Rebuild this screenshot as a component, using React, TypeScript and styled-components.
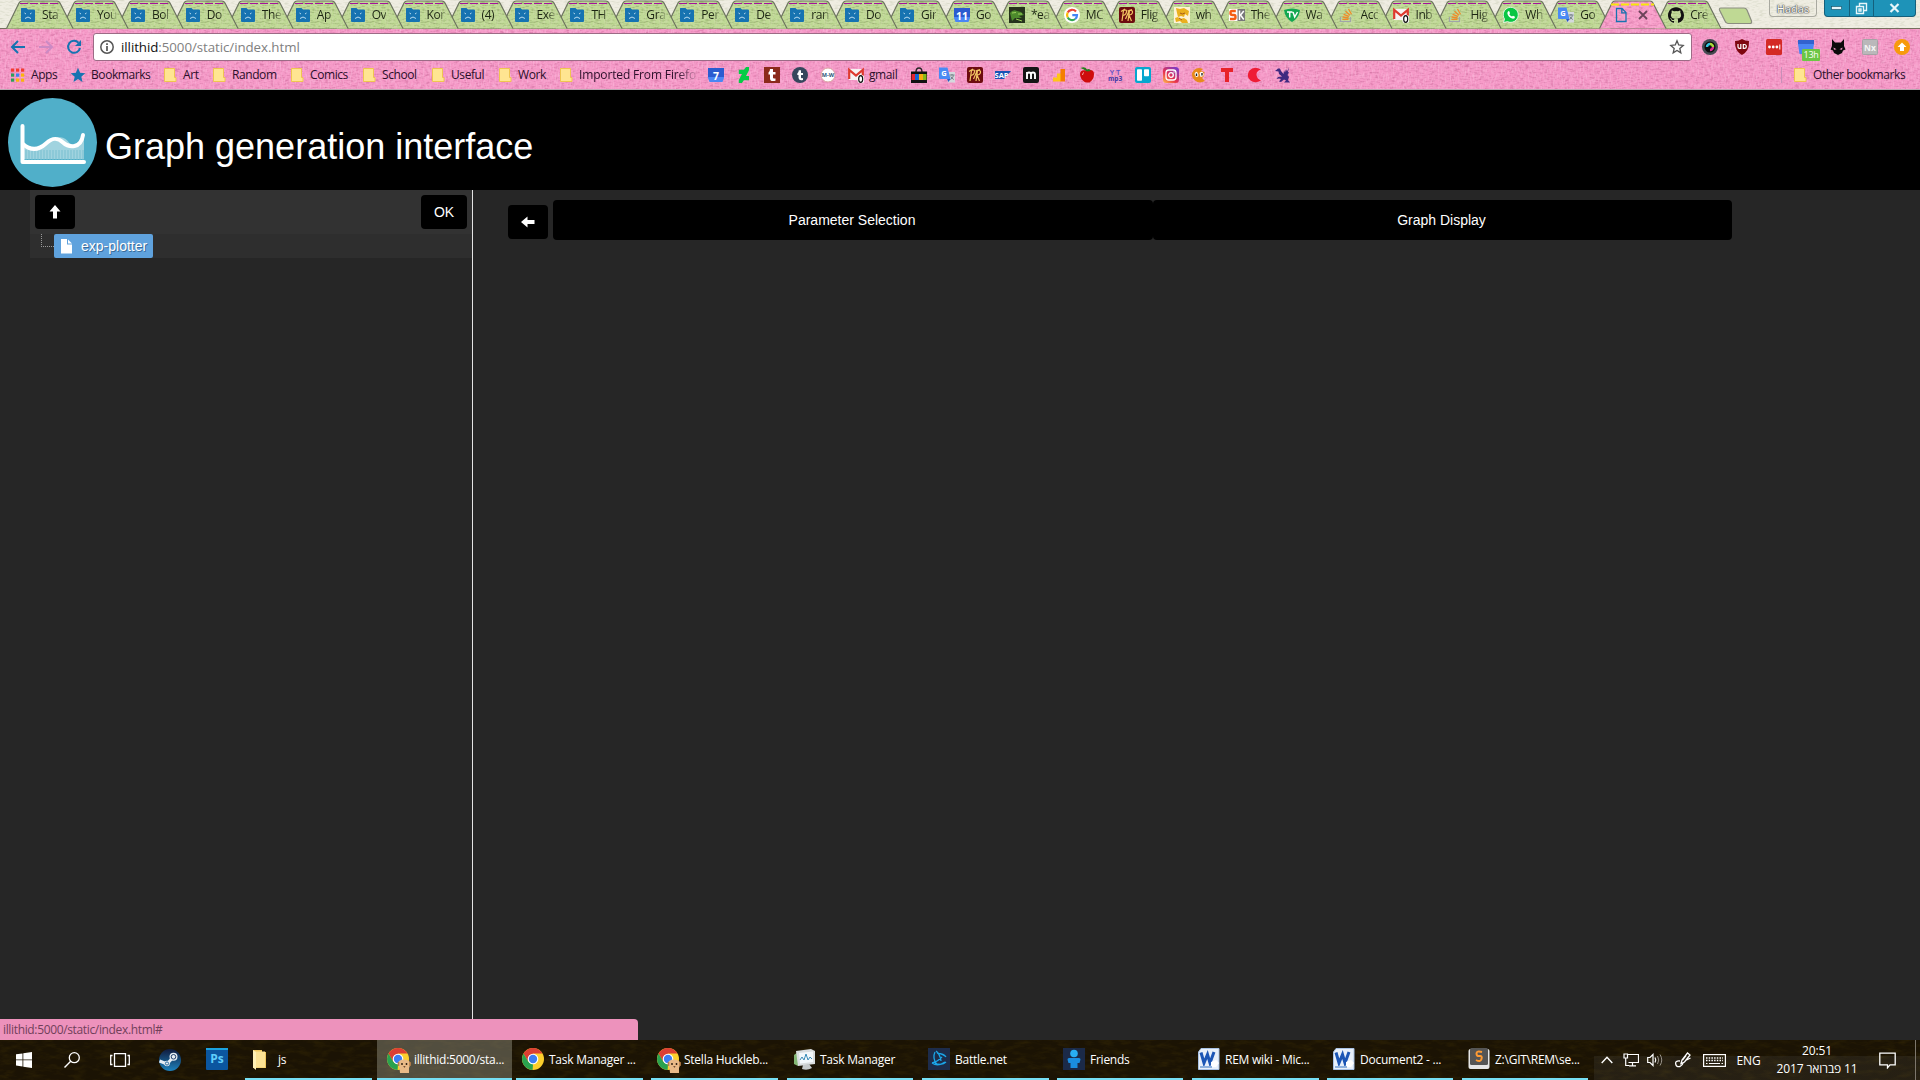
import React from "react";
import styled, { createGlobalStyle } from "styled-components";

const UI = `"Open Sans", "Noto Sans", "Liberation Sans", sans-serif`;

const Global = createGlobalStyle`
  html, body { margin: 0; padding: 0; background: #262626; }
  body { width: 1920px; height: 1080px; overflow: hidden; }
  * { box-sizing: border-box; }
  svg { display: block; flex: none; }
`;

const Screen = styled.div`
  width: 1920px;
  height: 1080px;
  display: flex;
  flex-direction: column;
  font-family: ${UI};
  overflow: hidden;
`;

const TextureLayer = styled.svg`
  position: absolute;
  inset: 0;
  width: 100%;
  height: 100%;
  pointer-events: none;
`;

/* ---------- browser chrome ---------- */

const Strip = styled.div`
  position: relative;
  height: 28px;
  background: #efede2;
  display: flex;
  padding-left: 6px;
`;

const Tab = styled.div<{ $z: number }>`
  position: relative;
  z-index: ${(p) => p.$z};
  width: 54.95px;
  flex: none;
  height: 29px;
  display: flex;
  align-items: center;
  padding: 1px 0 0 14px;
  gap: 6px;
`;

const TabShape = styled.svg`
  position: absolute;
  left: 0;
  top: 0;
`;

const TabIcon = styled.div`
  position: relative;
  width: 16px;
  height: 16px;
  flex: none;
`;

const TabTitle = styled.div`
  position: relative;
  flex: none;
  white-space: nowrap;
  font-size: 12px;
  line-height: 18px;
  letter-spacing: -0.4px;
  color: transparent;
  background: linear-gradient(90deg, #1c2412 11px, rgba(28, 36, 18, 0.1) 20px);
  background-clip: text;
`;

const CloseMark = styled.div`
  position: relative;
  margin-left: 3px;
`;

const NewTab = styled.div`
  margin: 7px 0 0 9px;
`;

const WindowBox = styled.div`
  position: relative;
  margin-left: auto;
  display: flex;
  align-items: flex-start;
  gap: 7px;
  padding-right: 4px;
`;

const UserBadge = styled.div`
  width: 48px;
  height: 17px;
  border: 1px solid #a9a9a0;
  border-top: 0;
  border-radius: 0 0 4px 4px;
  font-size: 11px;
  line-height: 17px;
  text-align: center;
  color: #fff;
  text-shadow: 0 0 1px #333, 0 0 1px #333, 0 0 2px #555;
`;

const WindowButtons = styled.div`
  display: flex;
  height: 17px;
  width: 92px;
  background: #1e93b8;
  border: 1px solid #14607c;
  border-top: 0;
  border-radius: 0 0 4px 4px;
`;

const WindowButton = styled.div<{ $w: number }>`
  width: ${(p) => p.$w}px;
  display: flex;
  justify-content: center;
  align-items: center;
  border-right: 1px solid #14607c;
  &:last-child { border-right: 0; }
`;

const Pink = styled.div`
  position: relative;
  height: 62px;
  background: #f69ac8;
  border-top: 1px solid #76705f;
  border-bottom: 1px solid #b9a9b2;
  display: flex;
  flex-direction: column;
`;

const NavRow = styled.div`
  position: relative;
  height: 36px;
  padding: 0 10px;
  display: flex;
  align-items: center;
`;

const NavIcons = styled.div`
  display: flex;
  gap: 12px;
  width: 83px;
`;

const AddressBar = styled.div`
  width: 1599px;
  height: 28px;
  background: #fff;
  border: 1px solid #9c6b86;
  border-radius: 3px;
  display: flex;
  align-items: center;
  padding: 0 6px 0 5px;
`;

const Url = styled.div`
  flex: 1;
  margin-left: 6px;
  font-size: 13.3px;
  line-height: 20px;
  letter-spacing: -0.06px;
  color: #808080;
  span { color: #111; }
`;

const Extensions = styled.div`
  display: flex;
  gap: 16px;
  margin-left: 10px;
`;

const BadgeHolder = styled.div`
  position: relative;
  width: 16px;
`;

const HourBadge = styled.div`
  position: absolute;
  left: 4px;
  top: 10px;
  width: 18px;
  height: 12px;
  background: #6cc644;
  border-radius: 1px;
  color: #fff;
  font-size: 9px;
  line-height: 12px;
  text-align: center;
  letter-spacing: -0.3px;
`;

const Bookmarks = styled.div`
  position: relative;
  height: 20px;
  display: flex;
  align-items: center;
  padding-left: 10px;
`;

const Bookmark = styled.div<{ $w: number; $fade?: boolean }>`
  width: ${(p) => p.$w}px;
  flex: none;
  display: flex;
  align-items: center;
  gap: 5px;
  font-size: 12px;
  line-height: 18px;
  color: #2b0f2a;
  white-space: nowrap;
  letter-spacing: ${(p) => (p.$fade ? -0.15 : -0.42)}px;
  span {
    mask-image: ${(p) => (p.$fade ? "linear-gradient(90deg,#000 84%,rgba(0,0,0,.15))" : "none")};
  }
`;

const OtherBookmarks = styled.div`
  margin-left: auto;
  height: 16px;
  border-left: 1px solid #c78fb8;
  padding-left: 10px;
  display: flex;
  align-items: center;
`;

/* ---------- page ---------- */

const Header = styled.div`
  height: 100px;
  background: #000;
  display: flex;
  align-items: center;
  padding: 5px 0 0 8px;
  gap: 7px;
  font-family: "Liberation Sans", Arial, sans-serif;
`;

const Title = styled.h1`
  margin: 9px 0 0;
  font-size: 36px;
  line-height: 40px;
  font-weight: 400;
  color: #fff;
`;

const Page = styled.div`
  position: relative;
  height: 850px;
  background: #262626;
  display: flex;
  font-family: "Liberation Sans", Arial, sans-serif;
`;

const Sidebar = styled.div`
  width: 473px;
  border-right: 1px solid #e4e4e4;
  padding-left: 30px;
`;

const SideTools = styled.div`
  height: 44px;
  padding: 5px;
  background: #323232;
  display: flex;
  justify-content: space-between;
`;

const BlackButton = styled.div<{ $w: number }>`
  width: ${(p) => p.$w}px;
  height: 34px;
  flex: none;
  background: #000;
  border-radius: 4px;
  color: #fff;
  font-size: 14px;
  display: flex;
  align-items: center;
  justify-content: center;
`;

const TreeRow = styled.div`
  height: 24px;
  background: #2e2e2e;
  padding-left: 11px;
  display: flex;
`;

const Branch = styled.div`
  width: 13px;
  height: 13px;
  border-left: 1px dotted #999;
  border-bottom: 1px dotted #999;
`;

const TreeNode = styled.div`
  width: 99px;
  height: 24px;
  background: #5fa2dd;
  border-radius: 2px;
  color: #fff;
  font-size: 14px;
  line-height: 24px;
  display: flex;
  align-items: center;
  padding-left: 7px;
  gap: 9px;
  text-shadow: 1px 1px 0 #3a6c98;
`;

const Content = styled.div`
  flex: 1;
  padding: 10px 0 0 35px;
  display: flex;
  align-items: flex-start;
`;

const BackHolder = styled.div`
  padding: 5px 5px 0 0;
`;

const PageTab = styled.div<{ $w: number }>`
  width: ${(p) => p.$w}px;
  height: 40px;
  padding-right: 2px;
  background: #000;
  border-radius: 4px;
  color: #fff;
  font-size: 14px;
  line-height: 40px;
  text-align: center;
`;

const StatusBar = styled.div`
  position: absolute;
  left: 0;
  bottom: 0;
  width: 638px;
  height: 21px;
  padding-left: 3px;
  background: #ed92bc;
  border-top-right-radius: 4px;
  font-family: ${UI};
  font-size: 12px;
  line-height: 21px;
  letter-spacing: -0.35px;
  color: #71405a;
`;

/* ---------- taskbar ---------- */

const Taskbar = styled.div`
  position: relative;
  height: 40px;
  background: #1b1304;
  display: flex;
`;

const PinnedRow = styled.div`
  position: relative;
  width: 245px;
  flex: none;
  display: flex;
  align-items: center;
`;

const Pinned = styled.div<{ $w: number }>`
  width: ${(p) => p.$w}px;
  flex: none;
  display: flex;
  justify-content: center;
`;

const Task = styled.div<{ $w: number; $mr: number; $active?: boolean }>`
  position: relative;
  width: ${(p) => p.$w}px;
  margin-right: ${(p) => p.$mr}px;
  flex: none;
  height: 40px;
  display: flex;
  align-items: center;
  gap: 5px;
  padding-left: ${(p) => (p.$active ? 10 : 6)}px;
  background: ${(p) => (p.$active ? "rgba(160,160,145,.42)" : "transparent")};
  border-bottom: 2px solid #76dff5;
  color: #fff;
  font-size: 12px;
  white-space: nowrap;
  letter-spacing: -0.25px;
`;

const Tray = styled.div`
  position: relative;
  flex: 1;
  display: flex;
  align-items: center;
  color: #fff;
  font-size: 12px;
  background: linear-gradient(180deg, transparent 40%, rgba(90, 90, 90, 0.18) 40%);
`;

const TrayItem = styled.div<{ $w: number }>`
  width: ${(p) => p.$w}px;
  flex: none;
  display: flex;
  justify-content: center;
  letter-spacing: -0.2px;
`;

const Clock = styled.div`
  width: 100px;
  flex: none;
  height: 40px;
  padding: 2px 0 0 2px;
  text-align: center;
  line-height: 18px;
  letter-spacing: -0.15px;
  white-space: nowrap;
  font-family: "Open Sans", "DejaVu Sans", sans-serif;
`;

const ShowDesktop = styled.div`
  width: 5px;
  height: 40px;
  margin-left: auto;
  border-left: 1px solid #7d766c;
`;

/* ---------- drawings ---------- */

const Defs = () => (
  <svg width="0" height="0" style={{ position: "absolute" }}>
    <defs>
      <filter id="weave" x="0" y="0" width="100%" height="100%" colorInterpolationFilters="sRGB">
        <feTurbulence type="fractalNoise" baseFrequency="0.2 0.6" numOctaves="2" seed="4" />
        <feColorMatrix values="0 0 0 0 0.6  0 0 0 0 0.2  0 0 0 0 0.4  2 0 0 0 -0.9" />
      </filter>
      <filter id="weaveLight" x="0" y="0" width="100%" height="100%" colorInterpolationFilters="sRGB">
        <feTurbulence type="fractalNoise" baseFrequency="0.6 0.2" numOctaves="2" seed="9" />
        <feColorMatrix values="0 0 0 0 1  0 0 0 0 0.88  0 0 0 0 0.95  2 0 0 0 -0.9" />
      </filter>
      <filter id="linen" x="0" y="0" width="100%" height="100%" colorInterpolationFilters="sRGB">
        <feTurbulence type="fractalNoise" baseFrequency="0.2 0.6" numOctaves="2" seed="2" />
        <feColorMatrix values="0 0 0 0 0.3  0 0 0 0 0.38  0 0 0 0 0.15  2 0 0 0 -0.95" />
      </filter>
      <filter id="grass" x="0" y="0" width="100%" height="100%" colorInterpolationFilters="sRGB">
        <feTurbulence type="fractalNoise" baseFrequency="0.07 0.2" numOctaves="4" seed="7" />
        <feColorMatrix values="0 0 0 0 0.27  0 0 0 0 0.21  0 0 0 0 0.02  2 0 0 0 -0.85" />
      </filter>
    </defs>
  </svg>
);

const Texture = ({ kinds, opacity = 1 }: { kinds: string[]; opacity?: number }) => (
  <TextureLayer opacity={opacity}>
    {kinds.map((k) => (
      <rect key={k} width="100%" height="100%" filter={`url(#${k})`} />
    ))}
  </TextureLayer>
);

const SvgText = ({ x = 8, y = 12, s = 10, c = "#fff", w = 700, children }: any) => (
  <text x={x} y={y} fontSize={s} fill={c} fontWeight={w} textAnchor="middle" fontFamily="Open Sans, sans-serif" letterSpacing="0">
    {children}
  </text>
);

const glyphs: Record<string, React.ReactNode> = {
  sad: (
    <>
      <path d="M1 1.500Q1 1 1.500 1H6.500L8 2.500H14Q15 2.500 15 3.500V14Q15 15 14 15H2Q1 15 1 14Z" fill="#1673b1" />
      <path d="M4.500 6l1.500 1M11.500 6l-1.500 1M5 11.500Q8 8.500 11 11.500" stroke="#b9dcf0" fill="none" />
    </>
  ),
  folder: <path d="M2.500 1.500H12.500V10.500H14V14.500H2.500Z" fill="#ffe591" stroke="#efc550" />,
  apps: (
    <>
      {["#f23b32", "#f23b32", "#f23b32", "#2f9e58", "#3c82f0", "#fbb40a", "#2f9e58", "#fbb40a", "#fbb40a"].map((c, i) => (
        <rect key={i} x={1 + (i % 3) * 5} y={1.500 + Math.floor(i / 3) * 5} width="3.200" height="3.200" fill={c} />
      ))}
    </>
  ),
  star: <path d="M8 .8l2.100 4.900 5.200.5-4 3.500 1.200 5.200L8 12.100l-4.500 2.800 1.200-5.200-4-3.500 5.200-.5z" fill="#1673b1" />,
  seven: (
    <>
      <path d="M0 1H16V11L14.500 15H1.500L0 11Z" fill="#4a86f4" />
      <path d="M0 1H16V10H0Z" fill="#2b5bd0" />
      <SvgText y={12.500} s={10.500}>7</SvgText>
    </>
  ),
  eleven: (
    <>
      <path d="M0 1H16V11L14.500 15H1.500L0 11Z" fill="#4a86f4" />
      <path d="M0 1H16V10H0Z" fill="#2b5bd0" />
      <SvgText y={13} s={10.500}>11</SvgText>
    </>
  ),
  deviant: <path d="M13 0v3.200L10 9h3v4.300H8l-.6.5L6 16H2.800v-3L6 7H2.800V2.800H8L8.500 2 10 0z" fill="#05cc47" />,
  tred: (
    <>
      <path d="M0 0H16V16H0Z" fill="#8b2a1b" />
      <path d="M6 2h3v3h2.500v2.500H9v3.300q0 1.200 2.500.6v2.300Q6 15 6 11.500v-4H4.500V5.500Q6 5 6 2z" fill="#fff" />
    </>
  ),
  tumblr: (
    <>
      <circle cx="8" cy="8" r="8" fill="#35465c" />
      <path d="M6.800 3.300h2.200v2.700h2v2H9v2.600q0 1 2 .5v1.800Q6.500 14 6.500 10.800V8H5.300V6.500Q6.700 5.900 6.800 3.300z" fill="#fff" />
    </>
  ),
  mw: (
    <>
      <circle cx="8" cy="8" r="7" fill="#fff" stroke="#d9a2a0" />
      <SvgText y={10.300} s={5.500} c="#295178">M-W</SvgText>
    </>
  ),
  gmail: (
    <>
      <path d="M1 2H15V13H1Z" fill="#f6f2f2" />
      <path d="M1.200 12V2.800L8 8.500l6.800-5.700V12" stroke="#de3a2f" strokeWidth="2.200" fill="none" />
      <rect x="9.500" y="8" width="6.500" height="8" rx="2" fill="#fff" />
      <ellipse cx="12.700" cy="12" rx="2" ry="3.300" fill="none" stroke="#111" strokeWidth="1.200" />
    </>
  ),
  bag: (
    <>
      <path d="M5 5Q5 1 8 1t3 4" stroke="#222" fill="none" strokeWidth="1.300" />
      <path d="M0 4.500H16V16H0Z" fill="#111" />
      <path d="M0.500 7H4V13H0.500Z" fill="#e8242e" />
      <path d="M4 7H8V13H4Z" fill="#1664d2" />
      <path d="M8 7H12V13H8Z" fill="#f7ab10" />
      <path d="M12 7H15.500V13H12Z" fill="#86b817" />
    </>
  ),
  translate: (
    <>
      <path d="M7 5h9v10.500H9z" fill="#d4d9dd" />
      <path d="M0 .5H8.500L11.500 12H1Q0 12 0 11Z" fill="#4a8af4" />
      <path d="M8 12h3.500L9.500 15z" fill="#2a56c6" />
      <SvgText x={5} y={9} s={7.500}>G</SvgText>
      <path d="M10.500 8h5M13 7v1.500M11.500 12.500q2.500-1.500 3-4M11.800 9.500q1 2 3 3" stroke="#6c7880" fill="none" strokeWidth=".9" />
    </>
  ),
  pr: (
    <>
      <rect width="16" height="16" rx="2" fill="#6d0c0f" />
      <path d="M3 14L4.500 3.500Q8 2 7.500 5T4 8.500M9 14l1.500-10.500Q14 3 13.500 5.500T10 8l2.500 6M2 4.500L6 2M8.500 4L13 2.500M6.500 12l4-9" stroke="#f2c463" strokeWidth="1.200" fill="none" />
    </>
  ),
  sap: (
    <>
      <path d="M0 4H16L9 12H0Z" fill="#1a53b4" />
      <SvgText x={6.500} y={11} s={7.500}>SAP</SvgText>
    </>
  ),
  m: (
    <>
      <rect width="16" height="16" rx="2" fill="#151515" />
      <path d="M4 12V5M4 7.500Q4 5.500 6 5.500T8 7.500V12M8 7.500q0-2 2-2t2 2V12" stroke="#fff" strokeWidth="1.900" fill="none" />
    </>
  ),
  analytics: (
    <>
      <path d="M2 10.500H6V14.500H2Z" fill="#ffc517" />
      <path d="M6 6.500H10V14.500H6Z" fill="#ffc517" />
      <path d="M9.500 2H14V14.500H9.500Z" fill="#f57e02" />
    </>
  ),
  apple: (
    <>
      <path d="M8 3.500Q15 1.500 15 7T10.500 15.500Q8 15.500 6 15.300Q1 12 1 7T8 3.500Z" fill="#cf0c0c" />
      <path d="M3.500 8q0-2 1.500-2.500" stroke="#f3a9a0" fill="none" />
      <path d="M1.500 1Q6-1 8 2.500 11 1 11.500 4L8 4.500Q5 2 1.500 1Z" fill="#277d1c" />
    </>
  ),
  yt: (
    <>
      <SvgText y={7.500} s={7.500} c="#5b52c8" w={600}>Y T</SvgText>
      <SvgText y={14} s={6.500} c="#433aa5">mp3</SvgText>
    </>
  ),
  trello: (
    <>
      <rect width="16" height="16" rx="2" fill="#06a7cf" />
      <rect x="2" y="2.200" width="5" height="11.500" rx=".8" fill="#fff" />
      <rect x="9" y="2.200" width="5" height="7" rx=".8" fill="#fff" />
    </>
  ),
  insta: (
    <>
      <defs>
        <linearGradient id="ig" x1="0" y1="1" x2=".8" y2="0">
          <stop offset="0" stopColor="#fdc04a" />
          <stop offset=".45" stopColor="#e8324c" />
          <stop offset="1" stopColor="#7a3ac8" />
        </linearGradient>
      </defs>
      <rect width="16" height="16" rx="3.500" fill="url(#ig)" />
      <rect x="3" y="3" width="10" height="10" rx="2.800" stroke="#fff" strokeWidth="1.300" fill="none" />
      <circle cx="8" cy="8" r="2.300" stroke="#fff" strokeWidth="1.300" fill="none" />
      <circle cx="11" cy="5" r=".7" fill="#fff" />
    </>
  ),
  orange: (
    <>
      <path d="M3 3Q7-.5 12 2L10 4l3.500 1L13 9l-2 2 3 3q-6 3-10-.5Q0 10 1 6Z" fill="#e78a1c" />
      <path d="M3.500 7q2-4 3.500-.5T5 10zM8.500 6q3-2.500 4 .5T9.500 10z" fill="#fff" />
      <path d="M5.500 6.500v2.500M11 6v2.500" stroke="#222" strokeWidth="1.400" />
    </>
  ),
  tbig: <path d="M2 1H14V5H10V15H6V5H2Z" fill="#e8232a" />,
  crescent: <path d="M14 2.500Q9 4 9.500 8T14 13.500Q8 17 3.500 13.500T2 4Q7-1.500 14 2.500Z" fill="#ee1c35" />,
  griffin: <path d="M14 .5l-2 4-1-2.500-1 3.500-1-2-.5 3.500L6 4 5 1.500 3 1.500 0 4l3.500.5L4 7l3 2.500L3 10l-1.500 2L4 11.500l2 .5-2 2.500L6 15l3-2.500 2 1L9 15.500h6L13 13l1-3-1.500-2 1.500-2.500-1-.5z" fill="#3f2a80" />,
  frog: (
    <>
      <path d="M0 0H16V16H0Z" fill="#26331c" />
      <path d="M1 6Q4 2 8 4L12 5 15 8 10 9 13 11 6 11 3 14Z" fill="#4d8a2c" />
      <path d="M3 6L7 5.500M7 12l6 2M9 7h4" stroke="#9ccf5a" />
    </>
  ),
  google: (
    <>
      <circle cx="8" cy="8" r="8" fill="#fff" />
      <g fill="none" strokeWidth="2.200">
        <path d="M12 4.500A5 5 0 0 0 3.700 5.600" stroke="#ea4335" />
        <path d="M3.700 5.600A5 5 0 0 0 3.700 10.400" stroke="#fbbc05" />
        <path d="M3.700 10.400A5 5 0 0 0 11.200 12" stroke="#34a853" />
        <path d="M11.200 12A5 5 0 0 0 13 8.200H8.300" stroke="#4285f4" />
      </g>
    </>
  ),
  wh: (
    <>
      <path d="M0 0H16V16H0Z" fill="#fdf3d6" />
      <path d="M2 1l4 1 4-1 5 3-1 5-3-2-1 3-3-1-3 1-1-4zM1 11l3-1 2 2 4-1 3 2 1 3H8l-2-2-4 1z" fill="#eab01f" />
      <path d="M6 6q2 2 5 0M5 11l3 2" stroke="#a85a1c" fill="none" />
    </>
  ),
  sk: (
    <>
      <path d="M0 2H16V14H0Z" fill="#fff" />
      <path d="M8.500 2H16V14H8.500Z" fill="#77777a" />
      <path d="M6.800 4H3Q1.500 4 1.500 6T3.500 8H5Q6.500 8 6.500 10T5 12H1" stroke="#f45c14" strokeWidth="2.400" fill="none" />
      <path d="M10.500 3.500V13M14.800 4L11.500 8l3.300 4.500" stroke="#fff" strokeWidth="1.500" fill="none" />
    </>
  ),
  tv: (
    <>
      <path d="M0 3Q8 0 16 3Q15 11 8 15Q1 11 0 3Z" fill="#12a751" />
      <path d="M3 5H8.500M5.700 5V10.500M9 5l1.700 5L13.500 5" stroke="#fff" strokeWidth="1.500" fill="none" />
    </>
  ),
  stack: (
    <>
      <path d="M1.500 10V14.500H11.500V10" stroke="#a0a5a9" fill="none" strokeWidth="1.200" />
      <path d="M3.500 12.300h6M3.600 10l6 .8M4.500 7.300l5.500 2M6.500 4.300l4.500 3.900M9.500 2l3 5.200" stroke="#f18a26" strokeWidth="1.300" />
    </>
  ),
  whats: (
    <>
      <path d="M0.500 15.500L1.500 12A7.500 7.500 0 1 1 4.500 14.600Z" fill="#0ac643" stroke="#fff" strokeWidth=".8" />
      <path d="M5 4.500q1-1 1.500.3l.5 1.500-.7 1Q7.500 9 9 9.600l1-.9 2 1q.2 2-2 2Q5 10.800 4.300 6Z" fill="#fff" />
    </>
  ),
  page: <path d="M3.500 1.500H9L13 5.500V14.500H3.500ZM8.800 1.500V5.800H13" fill="none" stroke="#1673b1" strokeWidth="1.300" />,
  github: (
    <path
      transform="translate(0 .2)"
      fill="#111"
      d="M8 0C3.580 0 0 3.580 0 8c0 3.540 2.290 6.530 5.470 7.590.4.070.55-.17.55-.38 0-.19-.01-.82-.01-1.490-2.010.37-2.530-.49-2.690-.94-.09-.23-.48-.94-.82-1.130-.28-.15-.68-.52-.01-.53.63-.01 1.080.58 1.230.82.72 1.210 1.870.87 2.330.66.070-.52.28-.87.51-1.070-1.780-.2-3.640-.89-3.640-3.950 0-.87.31-1.590.82-2.150-.08-.2-.36-1.020.08-2.120 0 0 .67-.21 2.200.82a7.600 7.600 0 0 1 4 0c1.530-1.040 2.200-.82 2.200-.82.44 1.100.16 1.920.08 2.120.51.56.82 1.270.82 2.150 0 3.070-1.870 3.750-3.650 3.950.29.25.54.73.54 1.480 0 1.070-.01 1.930-.01 2.200 0 .21.15.46.55.38A8 8 0 0 0 16 8c0-4.420-3.580-8-8-8z"
    />
  ),
  back: <path d="M15 8H2M8 2L2 8l6 6" stroke="#1673b1" strokeWidth="2" fill="none" />,
  forward: <path d="M1 8H14M8 2l6 6-6 6" stroke="#cb8ac4" strokeWidth="2" fill="none" />,
  reload: (
    <>
      <path d="M12.500 3.700A6 6 0 1 0 14 9" stroke="#1673b1" strokeWidth="2" fill="none" />
      <path d="M15 1V7H9Z" fill="#1673b1" />
    </>
  ),
  info: (
    <>
      <circle cx="8" cy="8" r="6.200" stroke="#555" strokeWidth="1.500" fill="none" />
      <path d="M8 7V12M8 4.200V5.900" stroke="#555" strokeWidth="1.700" />
    </>
  ),
  favorite: <path d="M8 1.800l1.700 4.200 4.500.4-3.400 3 1 4.400L8 11.400l-3.800 2.400 1-4.400-3.400-3 4.500-.4z" fill="none" stroke="#555" strokeWidth="1.300" />,
  lens: (
    <>
      <circle cx="8" cy="8" r="8" fill="#454a52" />
      <circle cx="8" cy="8" r="5.500" fill="#0c0c0e" />
      <path d="M5 8A3 3 0 0 1 8 5" stroke="#35c6e0" strokeWidth="2.400" fill="none" />
      <path d="M8 5A3 3 0 0 1 11 8" stroke="#a7d938" strokeWidth="2.400" fill="none" />
      <path d="M11 8A3 3 0 0 1 8 11" stroke="#df2a96" strokeWidth="2.400" fill="none" />
    </>
  ),
  ublock: (
    <>
      <path d="M8 0Q11 2 15 2Q15.500 12 8 16Q.5 12 1 2Q5 2 8 0Z" fill="#7e0710" />
      <path d="M4 5V8Q4 9.300 5.400 9.300H6.800V5M9.300 5.500H10.300Q12.300 5.500 12.300 7.400T10.300 9.300H9.300Z" stroke="#fff" strokeWidth="1.200" fill="none" />
    </>
  ),
  lastpass: (
    <>
      <rect width="16" height="16" rx="1.500" fill="#d42a25" />
      <circle cx="3.500" cy="8" r="1.400" fill="#fff" />
      <circle cx="7.200" cy="8" r="1.400" fill="#fff" />
      <circle cx="10.900" cy="8" r="1.400" fill="#fff" />
      <path d="M13.800 5.500V10.500" stroke="#fff" />
    </>
  ),
  calendar: (
    <>
      <path d="M0 1H16V5L14.500 15H1.500L0 5Z" fill="#4a86f4" />
      <path d="M0 1H16V5H0Z" fill="#3262cf" />
    </>
  ),
  cat: (
    <>
      <path d="M2 0L5 3.500H11L14 0V7L15.500 10.500 13 11.500 12 14 8 16 4 14 3 11.500 .5 10.500 2 7Z" fill="#0a0a0a" />
      <path d="M3.500 8.500l3 1.700-2.500.5zM12.500 8.500l-3 1.700 2.500.5z" fill="#f79cca" />
    </>
  ),
  nx: (
    <>
      <rect x=".5" y=".5" width="15" height="15" rx="1" fill="#bab8ba" stroke="#a5a3a5" />
      <SvgText y={11.500} s={8.500} c="#f5f5f5">Nx</SvgText>
    </>
  ),
  up: (
    <>
      <circle cx="8" cy="8" r="8" fill="#f79a0c" />
      <path d="M8 3.500L12.500 8H10V12H6V8H3.500Z" fill="#fff" />
    </>
  ),
};

const Icon = ({ name, size = 16 }: { name: string; size?: number }) => (
  <svg width={size} height={size} viewBox="0 0 16 16">
    {glyphs[name]}
  </svg>
);

const taskGlyphs: Record<string, React.ReactNode> = {
  chrome: (
    <>
      <circle cx="11" cy="11" r="11" fill="#fbcf2c" />
      <path d="M1.500 5.500A11 11 0 0 1 20.500 5.500H11L6.200 13.800Z" fill="#db3f33" />
      <path d="M1.500 5.500L6.300 13.800 11 16.500 10.600 22A11 11 0 0 1 1.500 5.500Z" fill="#2aa24f" />
      <circle cx="11" cy="11" r="5.300" fill="#fff" />
      <circle cx="11" cy="11" r="4.200" fill="#3c7df0" />
    </>
  ),
  dog: (
    <>
      <path d="M11 16Q11 11.500 17 11.500T23.500 16L22 20 22 25H13L12.500 20Z" fill="#e9b987" />
      <circle cx="15" cy="16" r=".9" fill="#26170c" />
      <circle cx="19.500" cy="16" r=".9" fill="#26170c" />
      <path d="M16.200 18.300h2.400l-1.200 1.400z" fill="#4b2817" />
      <path d="M11.500 14v4M23 14v4" stroke="#ba7e46" strokeWidth="1.500" />
    </>
  ),
  folder: (
    <>
      <path d="M2 2H11V4H15V20H2Z" fill="#efc75e" />
      <path d="M4 3.500H14V19.500H4Z" fill="#fbe294" />
      <path d="M2 2L5 4V22L2 19.500Z" fill="#fff0b5" />
    </>
  ),
  manager: (
    <>
      <path d="M1 7L5 4V18L1 16Z" fill="#84b774" />
      <path d="M3 3L18 1 22 3V16L5 18Z" fill="#d9dddf" />
      <path d="M6 5L20 3.500V14L7 15.500Z" fill="#f3f8fb" />
      <path d="M7 12l2-3 2 3 2-6 2 6 2-3 2 2" stroke="#3a8cb8" fill="none" />
      <path d="M10 17l6-1 3 4q-5 3-10 1z" fill="#c6cacb" />
    </>
  ),
  battle: (
    <>
      <rect width="22" height="22" fill="#1d2c4b" />
      <path d="M8 3Q12 6 13 13M7 4Q4 10 9 17M9 5Q16 6 18 9M4 15Q10 19 17 14M4 15Q9 14 14 9M18 14Q14 18 7 15" stroke="#1ba5e8" strokeWidth="1.300" fill="none" />
    </>
  ),
  friends: (
    <>
      <rect width="22" height="22" fill="#1b2a48" />
      <circle cx="11" cy="5.500" r="3.800" fill="#28aef2" />
      <path d="M6 10H16Q17.500 10 17.500 11.500L16.500 15H14.500V20H7.500V15H5.500L4.500 11.500Q4.500 10 6 10Z" fill="#1a8ee0" />
    </>
  ),
  word: (
    <>
      <path d="M3 .5H21V21.500H.5V4Z" fill="#e8f0fa" stroke="#a9c2e4" />
      <path d="M3 4.500L6 15 9.500 6.500 12 15 16 4" stroke="#1c56b5" strokeWidth="3" fill="none" />
      <path d="M13 14l5-2 3 3-3 4h-5z" fill="#fff" />
      <path d="M2 19H14" stroke="#8eb1dd" strokeWidth="2" />
    </>
  ),
  sublime: (
    <>
      <rect x=".5" y="1" width="21" height="20" rx="2" fill="#e6e6e6" />
      <rect x="2" y="0" width="18" height="17" rx="1.500" fill="#555" />
      <path d="M14 4Q8.500 2.500 8.500 5.500T11.500 8 13.500 11 8 12" stroke="#ff9a32" strokeWidth="2" fill="none" />
    </>
  ),
};

const TaskIcon = ({ name, dog }: { name: string; dog?: boolean }) => (
  <svg width="22" height="22" viewBox="0 0 22 22" overflow="visible">
    {taskGlyphs[name]}
    {dog && taskGlyphs.dog}
  </svg>
);

/* ---------- data ---------- */

const tabs: [string, string][] = [
  ["sad", "Sta"], ["sad", "You"], ["sad", "Bol"], ["sad", "Do"], ["sad", "The"], ["sad", "Ap"], ["sad", "Ov"],
  ["sad", "Kor"], ["sad", "(4)"], ["sad", "Exe"], ["sad", "TH"], ["sad", "Gra"], ["sad", "Per"], ["sad", "De"],
  ["sad", "ran"], ["sad", "Do"], ["sad", "Gir"], ["eleven", "Go"], ["frog", "*ea"], ["google", "MC"],
  ["pr", "Flig"], ["wh", "wh"], ["sk", "The"], ["tv", "Wa"], ["stack", "Acc"], ["gmail", "Inb"],
  ["stack", "Hig"], ["whats", "Wh"], ["translate", "Go"], ["page", ""], ["github", "Cre"],
];

const folders: [string, string, number][] = [
  ["apps", "Apps", 60], ["star", "Bookmarks", 92], ["folder", "Art", 49], ["folder", "Random", 78],
  ["folder", "Comics", 72], ["folder", "School", 69], ["folder", "Useful", 67], ["folder", "Work", 61],
];

const sites = ["bag", "translate", "pr", "sap", "m", "analytics", "apple", "yt", "trello", "insta", "orange", "tbig", "crescent", "griffin"];

const tasks: [string, string, number, number, boolean?, boolean?][] = [
  ["chrome", "illithid:5000/sta...", 135, 4, true, true],
  ["chrome", "Task Manager ...", 127, 8],
  ["chrome", "Stella Huckleb...", 127, 9, true],
  ["manager", "Task Manager", 126, 9],
  ["battle", "Battle.net", 127, 8],
  ["friends", "Friends", 126, 9],
  ["word", "REM wiki - Mic...", 127, 8],
  ["word", "Document2 - ...", 126, 9],
  ["sublime", "Z:\\GIT\\REM\\se...", 126, 6],
];

const BrowserTab = ({ icon, title, index }: { icon: string; title: string; index: number }) => {
  const active = icon === "page";
  return (
    <Tab $z={active ? 60 : 40 - index}>
      <TabShape width="68" height="29" viewBox="0 0 68 29">
        <path d="M.5 28.500L13 3Q14 1 16 1H51Q53 1 54 3L67 28.500" fill={active ? "#f9a0cb" : "#c0da96"} />
        <clipPath id={`shape${index}`}>
          <path d="M1 28.500L14 1H53L66 28.500Z" />
        </clipPath>
        <g clipPath={`url(#shape${index})`} opacity=".45">
          <rect width="68" height="29" filter={active ? "url(#weave)" : "url(#linen)"} />
          <rect width="68" height="29" filter="url(#weaveLight)" opacity=".6" />
        </g>
        <path d="M.5 28.500L13 3Q14 1 16 1H51Q53 1 54 3L67 28.500" fill="none" stroke="#6d7360" strokeWidth="1.200" />
        <path d={active ? "M12 4.500H55" : "M14 3.500H54"} stroke={active ? "#f7e70a" : "#a5119d"} strokeWidth={active ? 2 : 1.200} strokeDasharray="8 2" />
      </TabShape>
      <TabIcon>
        <Icon name={icon} />
      </TabIcon>
      {active ? (
        <CloseMark>
          <svg width="10" height="10" viewBox="0 0 10 10">
            <path d="M1 1L9 9M9 1L1 9" stroke="#6b4359" strokeWidth="1.800" />
          </svg>
        </CloseMark>
      ) : (
        <TabTitle>{title}</TabTitle>
      )}
    </Tab>
  );
};

const Browser = () => (
  <>
    <Strip>
      <Texture kinds={["linen"]} opacity={0.16} />
      {tabs.map(([icon, title], i) => (
        <BrowserTab key={i} icon={icon} title={title} index={i} />
      ))}
      <NewTab>
        <svg width="35" height="18" viewBox="0 0 35 18" style={{ position: "relative" }}>
          <path d="M3 1H26Q28 1 29 3L33.500 14Q34 16.500 32 16.500H10Q8 16.500 7 14L1.500 3Q1 1 3 1Z" fill="#bfd994" stroke="#8b8d80" strokeWidth="1.200" />
        </svg>
      </NewTab>
      <WindowBox>
        <UserBadge>Hadas</UserBadge>
        <WindowButtons>
          <WindowButton $w={25}>
            <svg width="12" height="6"><rect x=".5" y="1.500" width="10" height="3" fill="#e7f6fa" stroke="#124a5e" strokeWidth=".6" /></svg>
          </WindowButton>
          <WindowButton $w={25}>
            <svg width="13" height="13" viewBox="0 0 13 13">
              <path d="M4.500 4V1.500H11.500V8.500H9M1.500 4.500H8.500V11.500H1.500ZM4 7H6V9H4Z" fill="none" stroke="#e7f6fa" strokeWidth="1.400" />
            </svg>
          </WindowButton>
          <WindowButton $w={41}>
            <svg width="11" height="10" viewBox="0 0 11 10"><path d="M1.500 1L9.500 9M9.500 1L1.500 9" stroke="#e7f6fa" strokeWidth="2.200" /></svg>
          </WindowButton>
        </WindowButtons>
      </WindowBox>
    </Strip>
    <Pink>
      <Texture kinds={["weave", "weaveLight"]} opacity={0.38} />
      <NavRow>
        <NavIcons>
          <Icon name="back" />
          <Icon name="forward" />
          <Icon name="reload" />
        </NavIcons>
        <AddressBar>
          <Icon name="info" />
          <Url><span>illithid</span>:5000/static/index.html</Url>
          <Icon name="favorite" />
        </AddressBar>
        <Extensions>
          <Icon name="lens" />
          <Icon name="ublock" />
          <Icon name="lastpass" />
          <BadgeHolder>
            <Icon name="calendar" />
            <HourBadge>13h</HourBadge>
          </BadgeHolder>
          <Icon name="cat" />
          <Icon name="nx" />
          <Icon name="up" />
        </Extensions>
      </NavRow>
      <Bookmarks>
        {folders.map(([icon, label, w]) => (
          <Bookmark key={label} $w={w}><Icon name={icon} /><span>{label}</span></Bookmark>
        ))}
        <Bookmark $w={150} $fade><Icon name="folder" /><span>Imported From Firefo</span></Bookmark>
        {["seven", "deviant", "tred", "tumblr", "mw"].map((n) => (
          <Bookmark key={n} $w={28}><Icon name={n} /></Bookmark>
        ))}
        <Bookmark $w={63}><Icon name="gmail" /><span>gmail</span></Bookmark>
        {sites.map((n) => (
          <Bookmark key={n} $w={28}><Icon name={n} /></Bookmark>
        ))}
        <OtherBookmarks>
          <Bookmark $w={128}><Icon name="folder" /><span>Other bookmarks</span></Bookmark>
        </OtherBookmarks>
      </Bookmarks>
    </Pink>
  </>
);

const Logo = () => (
  <svg width="90" height="90" viewBox="0 0 90 90">
    <circle cx="44.500" cy="44.500" r="44.500" fill="#50afc9" />
    <path d="M15 47Q28 57 41 45T62 46Q72 50 76 38V61H15Z" fill="#a0d3df" />
    {Array.from({ length: 20 }, (_, i) => (
      <path key={i} d={`M${18 + i * 3} 52V62`} stroke="#78bfd0" strokeWidth="1" />
    ))}
    <path d="M14.500 28V64H76" fill="none" stroke="#fff" strokeWidth="4" strokeLinecap="round" strokeLinejoin="round" />
    <path d="M15 46C24 54 32 51 38 45.500S49 39 55 44.500S73 51 75 37" fill="none" stroke="#fff" strokeWidth="4" strokeLinecap="round" />
  </svg>
);

const Arrow = ({ left }: { left?: boolean }) => (
  <svg width="14" height="14" viewBox="0 0 14 14">
    <path d="M7 0L12.500 6.500H9V13.500H5V6.500H1.500Z" fill="#fff" transform={left ? "rotate(-90 7 7)" : undefined} />
  </svg>
);

export default function App() {
  return (
    <>
      <Global />
      <Defs />
      <Screen>
        <Browser />
        <Header>
          <Logo />
          <Title>Graph generation interface</Title>
        </Header>
        <Page>
          <Sidebar>
            <SideTools>
              <BlackButton $w={40}><Arrow /></BlackButton>
              <BlackButton $w={46}>OK</BlackButton>
            </SideTools>
            <TreeRow>
              <Branch />
              <TreeNode>
                <svg width="11" height="15" viewBox="0 0 11 15">
                  <path d="M0 0H6V5.500H11V14.500H0Z" fill="#fff" />
                  <path d="M7 .5V4.500H11Z" fill="#fff" />
                </svg>
                exp-plotter
              </TreeNode>
            </TreeRow>
          </Sidebar>
          <Content>
            <BackHolder><BlackButton $w={40}><Arrow left /></BlackButton></BackHolder>
            <PageTab $w={600}>Parameter Selection</PageTab>
            <PageTab $w={579}>Graph Display</PageTab>
          </Content>
          <StatusBar>illithid:5000/static/index.html#</StatusBar>
        </Page>
        <Taskbar>
          <Texture kinds={["grass"]} opacity={0.4} />
          <PinnedRow>
            <Pinned $w={48}>
              <svg width="16" height="16" viewBox="0 0 16 16"><path d="M0 2.300L6.500 1.400V7.500H0ZM7.300 1.300L16 0V7.500H7.300ZM0 8.300H6.500V14.500L0 13.600ZM7.300 8.300H16V16L7.300 14.700Z" fill="#fff" /></svg>
            </Pinned>
            <Pinned $w={48}>
              <svg width="16" height="16" viewBox="0 0 16 16"><circle cx="10.300" cy="5.700" r="5" fill="none" stroke="#fff" strokeWidth="1.300" /><path d="M6.700 9.300L.5 15.500" stroke="#fff" strokeWidth="1.400" /></svg>
            </Pinned>
            <Pinned $w={48}>
              <svg width="20" height="14" viewBox="0 0 20 14"><path d="M4.500 .7H15.500V13.300H4.500ZM2.500 2.500H.7V11.500H2.500M17.500 2.500H19.300V11.500H17.500" fill="none" stroke="#fff" strokeWidth="1.300" /></svg>
            </Pinned>
            <Pinned $w={52}>
              <svg width="22" height="22" viewBox="0 0 22 22">
                <defs><linearGradient id="steam" x2="0" y2="1"><stop stopColor="#101a3c" /><stop offset="1" stopColor="#1d82bd" /></linearGradient></defs>
                <circle cx="11" cy="11" r="11" fill="url(#steam)" />
                <path d="M.5 12L8 15L13 9.500" stroke="#e6edf3" strokeWidth="3" fill="none" />
                <circle cx="14.500" cy="7.800" r="4" fill="#e6edf3" /><circle cx="14.500" cy="7.800" r="2.300" fill="none" stroke="#20406b" />
                <circle cx="8" cy="14.500" r="2.800" fill="#e6edf3" /><circle cx="8" cy="14.500" r="1.600" fill="none" stroke="#286a9d" />
              </svg>
            </Pinned>
            <Pinned $w={42}>
              <svg width="22" height="22" viewBox="0 0 22 22" style={{ marginTop: -3 }}>
                <rect width="22" height="22" rx="1" fill="#0b56a0" /><path d="M0 0H22V2H0Z" fill="#1ba2e0" />
                <SvgText x={11} y={15} s={12} c="#5fcdfb">Ps</SvgText>
              </svg>
            </Pinned>
          </PinnedRow>
          <Task $w={127} $mr={5}><TaskIcon name="folder" /><span>js</span></Task>
          {tasks.map(([icon, label, w, mr, dog, active], i) => (
            <Task key={i} $w={w} $mr={mr} $active={active}><TaskIcon name={icon} dog={dog} /><span>{label}</span></Task>
          ))}
          <Tray>
            <TrayItem $w={26}><svg width="12" height="8" viewBox="0 0 12 8"><path d="M.7 7L6 1.200 11.300 7" fill="none" stroke="#fff" strokeWidth="1.400" /></svg></TrayItem>
            <TrayItem $w={22}><svg width="16" height="14" viewBox="0 0 16 14"><path d="M4 1.500H15.500V9.500H5.500M9.500 9.500V12.500M6 12.800H13M1 1H4.500V5H1ZM2.700 5V12.500H6" fill="none" stroke="#fff" strokeWidth="1.200" /></svg></TrayItem>
            <TrayItem $w={26}><svg width="16" height="14" viewBox="0 0 16 14"><path d="M.7 4.500H3L6 1.500V12.500L3 9.500H.7ZM8 4.500Q9.500 7 8 9.500" fill="none" stroke="#fff" strokeWidth="1.200" /><path d="M10.500 3Q13 7 10.500 11M13 1.500Q16.500 7 13 12.500" fill="none" stroke="#9a948a" /></svg></TrayItem>
            <TrayItem $w={30}><svg width="16" height="16" viewBox="0 0 16 16"><path d="M6 11.500L7 8 12.500 1 15 3 9.500 10ZM11 3.500L7.500 8M15.500 6L11.500 8M5 9Q0 8.500 .7 12T5 14.500Q7.500 13 8 11" fill="none" stroke="#fff" strokeWidth="1.300" /></svg></TrayItem>
            <TrayItem $w={33}><svg width="23" height="13" viewBox="0 0 23 13"><rect x=".6" y=".6" width="21.800" height="11.800" fill="none" stroke="#fff" strokeWidth="1.200" /><path d="M3 4H20M3 6.500H20" stroke="#fff" strokeWidth="1.300" strokeDasharray="1.500 1.200" /><path d="M3 9.500H4.500M6 9.500H17M18.500 9.500H20" stroke="#fff" /></svg></TrayItem>
            <TrayItem $w={35}>ENG</TrayItem>
            <Clock>
              <div>20:51</div>
              <div dir="rtl">11 פברואר 2017</div>
            </Clock>
            <TrayItem $w={42}><svg width="17" height="17" viewBox="0 0 17 17"><path d="M.8 1.200H16.200V12.800H11L8.500 15.800V12.800H.8Z" fill="none" stroke="#fff" strokeWidth="1.300" /></svg></TrayItem>
            <ShowDesktop />
          </Tray>
        </Taskbar>
      </Screen>
    </>
  );
}
